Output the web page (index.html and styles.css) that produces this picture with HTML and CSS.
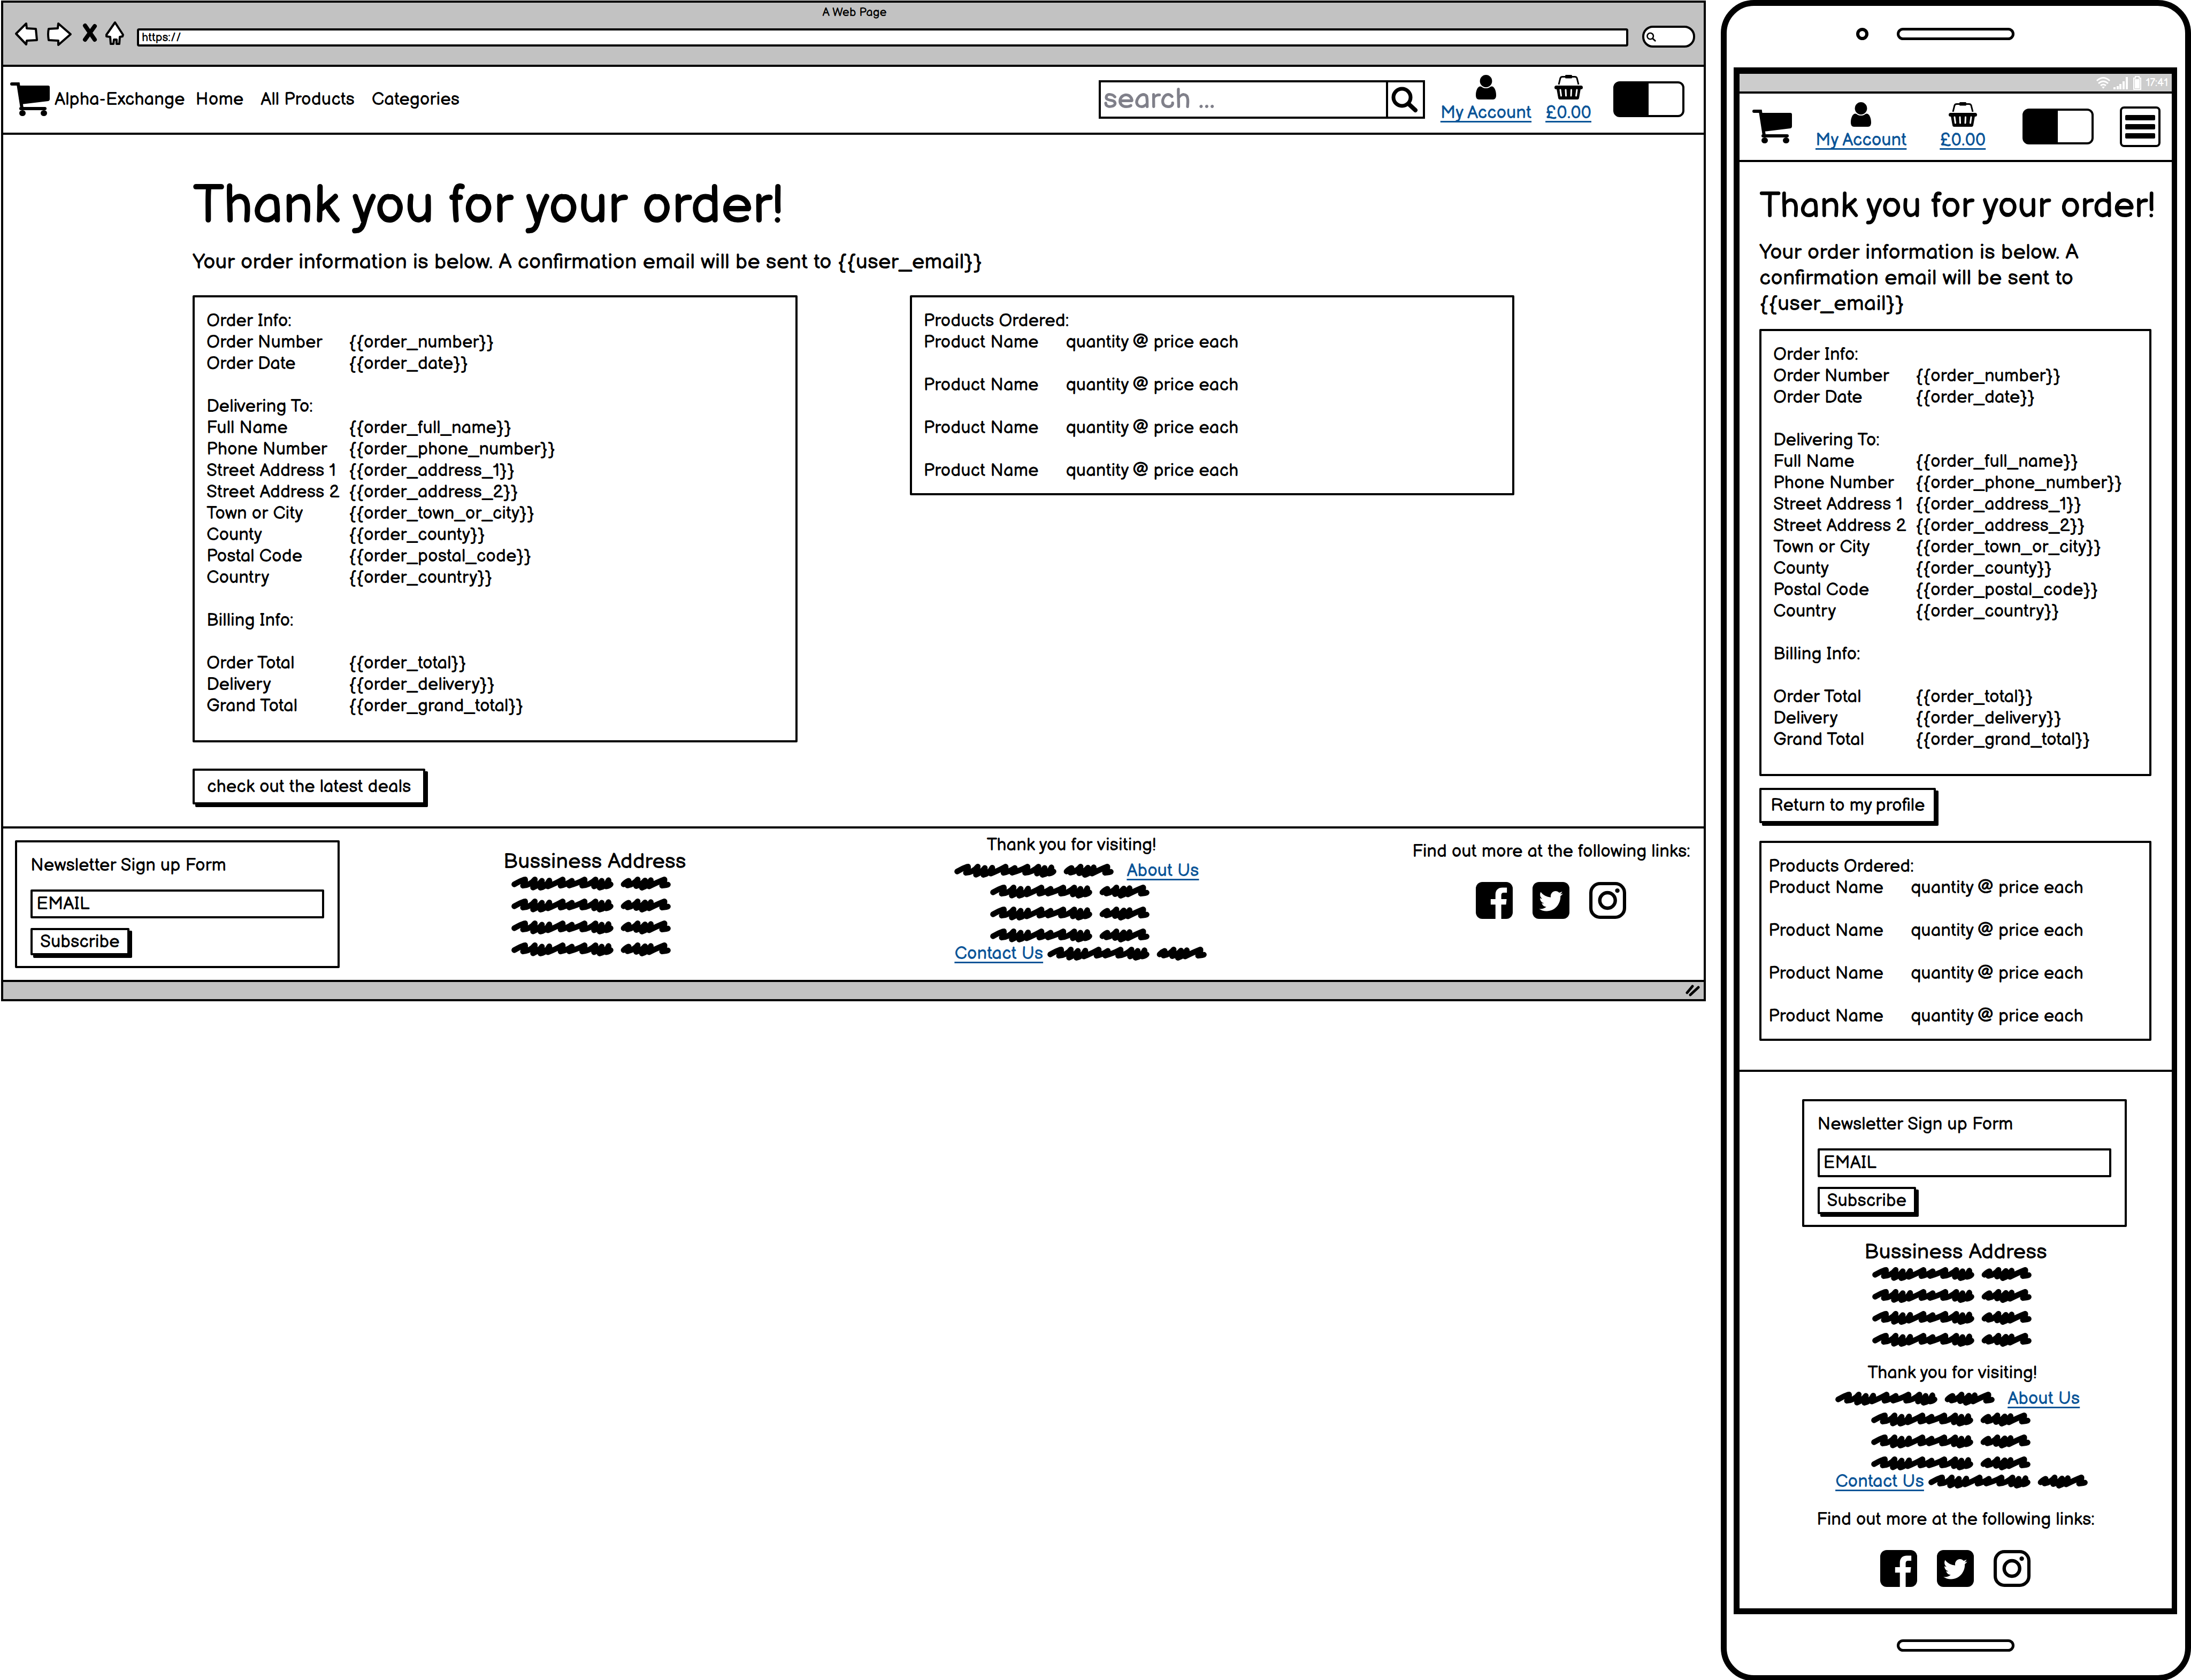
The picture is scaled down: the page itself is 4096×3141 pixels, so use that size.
FILE: index.html
```html
<!DOCTYPE html>
<html lang="en">
<head>
<meta charset="utf-8">
<title>Alpha-Exchange order confirmation wireframe</title>
<link rel="stylesheet" href="styles.css">
</head>
<body>
<svg class="sprite" aria-hidden="true">
  <symbol id="cart" viewBox="0 0 74 63">
    <path d="M3 3h12l7 45" fill="none" stroke="#000" stroke-width="6" stroke-linecap="round"/>
    <path d="M16 6h55q3 0 3 3v22q0 3-3 4l-50 6z"/>
    <rect x="17" y="46" width="51" height="6" rx="3"/>
    <ellipse cx="23" cy="57.500" rx="6" ry="5.500"/><ellipse cx="63" cy="57.500" rx="6" ry="5.500"/>
  </symbol>
  <symbol id="person" viewBox="0 0 38 46">
    <ellipse cx="19" cy="11.600" rx="11.400" ry="11.600"/>
    <path d="M8 21.500C11 21 12 25 19 25S27 21 30 21.500C35 22 38 30 38 38c0 5-2 8-6 8H6c-4 0-6-3-6-8C0 30 3 22 8 21.500z"/>
  </symbol>
  <symbol id="basket" viewBox="0 0 53 46">
    <path d="M8 18l3-12q1-2.500 4-2.500h23q3 0 4 2.500l3 12" fill="none" stroke="#000" stroke-width="3"/>
    <rect x="20" width="13" height="6.500" rx="1.500"/>
    <rect y="20" width="53" height="7" rx="3.500"/>
    <path d="M4 26h45l-3 17q-.5 3-3 3H10q-2.500 0-3-3z"/>
    <path d="M11 28l1.500 11M21 28l.5 11M31.500 28l-.5 11M42 28l-1.500 11" stroke="#fff" stroke-width="3" stroke-linecap="round"/>
  </symbol>
  <symbol id="scribble" viewBox="0 0 1076 94">
    <path fill="none" stroke="#000" stroke-width="38" stroke-linecap="round" stroke-linejoin="round" d="M19 52Q80 18 92 19 96 34 78 61 130 56 158 19 156 50 146 74 180 60 206 28 206 50 196 75 236 66 256 26 258 50 246 66 290 50 346 19 350 36 332 61 370 54 408 28 406 48 390 60 450 44 494 19 498 36 478 61 530 56 568 19 566 46 558 66 590 56 610 28 610 54 596 75 636 66 656 24 658 48 640 66 664 62 670 52M758 52Q776 34 792 28 796 46 784 60 830 50 853 19 852 44 843 64 880 54 903 26 900 54 882 75 920 64 942 24 942 50 930 66 990 36 1034 19 1036 40 1018 61 1050 58 1057 54"/>
  </symbol>
  <symbol id="facebook" viewBox="0 0 248 248">
    <rect width="248" height="248" rx="44"/>
    <path fill="#fff" d="M132 248V152H100V115h32V85c0-30 18-47 46-47h31v34h-21c-12 0-17 6-17 18v25h36l-4 37h-32v96z"/>
  </symbol>
  <symbol id="twitter" viewBox="0 0 248 248">
    <rect width="248" height="248" rx="44"/>
    <path fill="#fff" transform="translate(12 -4.500) scale(.5 .52)" d="M351.100 190.800c.2 2.800.2 5.700.2 8.500 0 86.700-66 186.600-186.600 186.600-37.200 0-71.700-10.800-100.700-29.400 5.300.6 10.400.8 15.800.8 30.700 0 58.900-10.400 81.400-28-28.800-.6-53-19.500-61.300-45.500 10.100 1.500 19.200 1.500 29.600-1.200-30-6.100-52.500-32.500-52.500-64.400v-.8c8.700 4.900 18.900 7.900 29.600 8.300a65.447 65.447 0 0 1-29.200-54.600c0-12.200 3.200-23.400 8.900-33.100 32.300 39.800 80.800 65.800 135.200 68.600-9.300-44.500 24-80.600 64-80.600 18.900 0 35.900 7.900 47.900 20.700 14.800-2.800 29-8.300 41.600-15.800-4.900 15.200-15.200 28-28.800 36.100 13.200-1.400 26-5.100 37.800-10.200-8.900 13.100-20.100 24.700-32.900 34z"/>
  </symbol>
  <symbol id="instagram" viewBox="0 0 248 248">
    <rect x="11" y="11" width="226" height="226" rx="62" fill="none" stroke="#000" stroke-width="22"/>
    <circle cx="123" cy="124" r="52" fill="none" stroke="#000" stroke-width="23"/>
    <circle cx="189" cy="58" r="15"/>
  </symbol>
  <symbol id="magnifier" viewBox="0 0 50 50">
    <circle cx="20" cy="21" r="16" fill="none" stroke="#000" stroke-width="7"/>
    <path d="M32 33l13 12" stroke="#000" stroke-width="8" stroke-linecap="round"/>
  </symbol>
</svg>

<div class="board">
  <section class="browser" aria-label="Desktop layout">
    <header class="chrome">
      <p class="chrome-title">A Web Page</p>
      <div class="toolbar">
        <svg class="history" viewBox="0 0 220 50" aria-hidden="true">
          <g fill="#fff" stroke="#000" stroke-width="4" stroke-linejoin="round">
            <path d="M4 24L23 5l1 9 17 1 2 21-19 1-1 7z"/>
            <path d="M65 15l17-1 1-9 23 20-23 20v-8l-18-1q-2-12 0-21z"/>
            <path d="M189 3l15 23-1 3-5 1-1 13h-5v-8h-5l-1 8h-5l-1-13-7-1v-3z"/>
          </g>
          <path d="M133 9l18 26M151 10l-18 25" stroke="#000" stroke-width="8" stroke-linecap="round"/>
        </svg>
        <input class="address" type="text" value="https://" aria-label="Address">
        <button class="pill" type="button" aria-label="Web search"><svg class="pill-icon"><use href="#magnifier"/></svg></button>
      </div>
    </header>

    <nav class="nav">
      <svg class="cart"><use href="#cart"/></svg>
      <a class="nav-link brand" href="#">Alpha-Exchange</a>
      <a class="nav-link home" href="#">Home</a>
      <a class="nav-link products" href="#">All Products</a>
      <a class="nav-link" href="#">Categories</a>
      <form class="search">
        <input class="search-input" type="text" placeholder="search ..." aria-label="Search">
        <button class="search-button" type="button" aria-label="Search"><svg class="search-icon"><use href="#magnifier"/></svg></button>
      </form>
      <a class="shortcut" href="#"><svg class="person"><use href="#person"/></svg><span class="link">My Account</span></a>
      <a class="shortcut" href="#"><svg class="basket"><use href="#basket"/></svg><span class="link">£0.00</span></a>
      <input class="toggle" type="checkbox" aria-label="Theme">
    </nav>

    <main class="main">
      <h1 class="title">Thank you for your order!</h1>
      <p class="lead">Your order information is below. A confirmation email will be sent to {{user_email}}</p>
      <div class="columns">
        <div class="box">
          <table class="table">
            <tbody>
              <tr><th>Order Info:</th><td></td></tr>
              <tr><th>Order Number</th><td>{{order_number}}</td></tr>
              <tr><th>Order Date</th><td>{{order_date}}</td></tr>
            </tbody>
            <tbody>
              <tr class="spaced"><th>Delivering To:</th><td></td></tr>
              <tr><th>Full Name</th><td>{{order_full_name}}</td></tr>
              <tr><th>Phone Number</th><td>{{order_phone_number}}</td></tr>
              <tr><th>Street Address 1</th><td>{{order_address_1}}</td></tr>
              <tr><th>Street Address 2</th><td>{{order_address_2}}</td></tr>
              <tr><th>Town or City</th><td>{{order_town_or_city}}</td></tr>
              <tr><th>County</th><td>{{order_county}}</td></tr>
              <tr><th>Postal Code</th><td>{{order_postal_code}}</td></tr>
              <tr><th>Country</th><td>{{order_country}}</td></tr>
            </tbody>
            <tbody>
              <tr class="spaced"><th>Billing Info:</th><td></td></tr>
              <tr class="spaced"><th>Order Total</th><td>{{order_total}}</td></tr>
              <tr><th>Delivery</th><td>{{order_delivery}}</td></tr>
              <tr><th>Grand Total</th><td>{{order_grand_total}}</td></tr>
            </tbody>
          </table>
        </div>
        <div class="box box-products">
          <table class="table">
            <tbody>
              <tr><th>Products Ordered:</th><td></td></tr>
              <tr><th>Product Name</th><td>quantity @ price each</td></tr>
              <tr class="spaced"><th>Product Name</th><td>quantity @ price each</td></tr>
              <tr class="spaced"><th>Product Name</th><td>quantity @ price each</td></tr>
              <tr class="spaced"><th>Product Name</th><td>quantity @ price each</td></tr>
            </tbody>
          </table>
        </div>
      </div>
      <button class="button deals" type="button">check out the latest deals</button>
    </main>

    <footer class="footer">
      <form class="newsletter">
        <label class="newsletter-title" for="email-desktop">Newsletter Sign up Form</label>
        <input class="email" id="email-desktop" type="text" value="EMAIL">
        <button class="button subscribe" type="button">Subscribe</button>
      </form>
      <section class="address-block">
        <h2 class="address-title">Bussiness Address</h2>
        <div class="scribbles">
          <svg class="scribble"><use href="#scribble"/></svg>
          <svg class="scribble"><use href="#scribble"/></svg>
          <svg class="scribble"><use href="#scribble"/></svg>
          <svg class="scribble"><use href="#scribble"/></svg>
        </div>
      </section>
      <section class="visit">
        <p class="visit-title">Thank you for visiting!</p>
        <div class="visit-row about"><svg class="scribble"><use href="#scribble"/></svg><a class="link" href="#">About Us</a></div>
        <div class="scribbles visit-lines">
          <svg class="scribble"><use href="#scribble"/></svg>
          <svg class="scribble"><use href="#scribble"/></svg>
          <svg class="scribble"><use href="#scribble"/></svg>
        </div>
        <div class="visit-row"><a class="link" href="#">Contact Us</a><svg class="scribble"><use href="#scribble"/></svg></div>
      </section>
      <section class="social">
        <p class="social-title">Find out more at the following links:</p>
        <div class="social-row">
          <a href="#" aria-label="Facebook"><svg class="social-icon"><use href="#facebook"/></svg></a>
          <a href="#" aria-label="Twitter"><svg class="social-icon"><use href="#twitter"/></svg></a>
          <a href="#" aria-label="Instagram"><svg class="social-icon"><use href="#instagram"/></svg></a>
        </div>
      </section>
    </footer>
    <div class="status">
      <svg class="grip" viewBox="0 0 27 22" aria-hidden="true"><path d="M3 15L13 3M9 19L24 5" stroke="#000" stroke-width="5" stroke-linecap="round"/></svg>
    </div>
  </section>

  <section class="phone" aria-label="Mobile layout">
    <div class="bezel-top"><span class="camera"></span><span class="speaker"></span></div>
    <div class="screen">
      <div class="phone-status">
        <svg class="wifi" viewBox="0 0 28 24" aria-hidden="true"><g fill="none" stroke="#fff" stroke-width="3"><path d="M2 8Q14-3 26 8M5 13Q14 5 23 13M9 17Q14 13 19 17"/></g><path fill="#fff" d="M11 19h6l-3 4z"/></svg>
        <svg class="signal" viewBox="0 0 27 24" aria-hidden="true"><path stroke="#fff" stroke-width="4" d="M2 24v-4M8 24v-6M13 24V14M19 24V9M25 24V1"/></svg>
        <svg class="battery" viewBox="0 0 15 26" aria-hidden="true"><path fill="none" stroke="#fff" stroke-width="2" d="M1 4h3V1h7v3h3v21H1z"/><path fill="#fff" d="M3 6h9v17H3z"/></svg>
        <span class="clock">17:41</span>
      </div>
      <nav class="phone-nav">
        <svg class="cart"><use href="#cart"/></svg>
        <a class="shortcut" href="#"><svg class="person"><use href="#person"/></svg><span class="link">My Account</span></a>
        <a class="shortcut" href="#"><svg class="basket"><use href="#basket"/></svg><span class="link">£0.00</span></a>
        <input class="toggle" type="checkbox" aria-label="Theme">
        <button class="menu" type="button" aria-label="Menu"><span class="bar"></span><span class="bar"></span><span class="bar"></span></button>
      </nav>
      <main class="phone-main">
        <h1 class="phone-title">Thank you for your order!</h1>
        <p class="lead">Your order information is below. A confirmation email will be sent to {{user_email}}</p>
        <div class="box">
          <table class="table">
            <tbody>
              <tr><th>Order Info:</th><td></td></tr>
              <tr><th>Order Number</th><td>{{order_number}}</td></tr>
              <tr><th>Order Date</th><td>{{order_date}}</td></tr>
            </tbody>
            <tbody>
              <tr class="spaced"><th>Delivering To:</th><td></td></tr>
              <tr><th>Full Name</th><td>{{order_full_name}}</td></tr>
              <tr><th>Phone Number</th><td>{{order_phone_number}}</td></tr>
              <tr><th>Street Address 1</th><td>{{order_address_1}}</td></tr>
              <tr><th>Street Address 2</th><td>{{order_address_2}}</td></tr>
              <tr><th>Town or City</th><td>{{order_town_or_city}}</td></tr>
              <tr><th>County</th><td>{{order_county}}</td></tr>
              <tr><th>Postal Code</th><td>{{order_postal_code}}</td></tr>
              <tr><th>Country</th><td>{{order_country}}</td></tr>
            </tbody>
            <tbody>
              <tr class="spaced"><th>Billing Info:</th><td></td></tr>
              <tr class="spaced"><th>Order Total</th><td>{{order_total}}</td></tr>
              <tr><th>Delivery</th><td>{{order_delivery}}</td></tr>
              <tr><th>Grand Total</th><td>{{order_grand_total}}</td></tr>
            </tbody>
          </table>
        </div>
        <button class="button profile" type="button">Return to my profile</button>
        <div class="box box-products">
          <table class="table">
            <tbody>
              <tr><th>Products Ordered:</th><td></td></tr>
              <tr><th>Product Name</th><td>quantity @ price each</td></tr>
              <tr class="spaced"><th>Product Name</th><td>quantity @ price each</td></tr>
              <tr class="spaced"><th>Product Name</th><td>quantity @ price each</td></tr>
              <tr class="spaced"><th>Product Name</th><td>quantity @ price each</td></tr>
            </tbody>
          </table>
        </div>
      </main>
      <footer class="phone-footer">
        <form class="newsletter">
          <label class="newsletter-title" for="email-phone">Newsletter Sign up Form</label>
          <input class="email" id="email-phone" type="text" value="EMAIL">
          <button class="button subscribe" type="button">Subscribe</button>
        </form>
        <section class="address-block">
          <h2 class="address-title">Bussiness Address</h2>
          <div class="scribbles">
            <svg class="scribble"><use href="#scribble"/></svg>
            <svg class="scribble"><use href="#scribble"/></svg>
            <svg class="scribble"><use href="#scribble"/></svg>
            <svg class="scribble"><use href="#scribble"/></svg>
          </div>
        </section>
        <section class="visit">
          <p class="visit-title">Thank you for visiting!</p>
          <div class="visit-row about"><svg class="scribble"><use href="#scribble"/></svg><a class="link" href="#">About Us</a></div>
          <div class="scribbles visit-lines">
            <svg class="scribble"><use href="#scribble"/></svg>
            <svg class="scribble"><use href="#scribble"/></svg>
            <svg class="scribble"><use href="#scribble"/></svg>
          </div>
          <div class="visit-row"><a class="link" href="#">Contact Us</a><svg class="scribble"><use href="#scribble"/></svg></div>
        </section>
        <section class="social">
          <p class="social-title">Find out more at the following links:</p>
          <div class="social-row">
            <a href="#" aria-label="Facebook"><svg class="social-icon"><use href="#facebook"/></svg></a>
            <a href="#" aria-label="Twitter"><svg class="social-icon"><use href="#twitter"/></svg></a>
            <a href="#" aria-label="Instagram"><svg class="social-icon"><use href="#instagram"/></svg></a>
          </div>
        </section>
      </footer>
    </div>
    <div class="bezel-bottom"><span class="speaker"></span></div>
  </section>
</div>
</body>
</html>
```
FILE: styles.css
```css
:root {
  --ink: #000;
  --link: #0b5598;
  --line: 4px solid var(--ink);
}

* { box-sizing: border-box; }

body {
  margin: 0;
  background: #fff;
  color: var(--ink);
  font: 33px/40px "Balsamiq Sans", "Liberation Sans", sans-serif;
}

h1, h2, p { margin: 0; font-weight: 400; }
svg { display: block; flex: none; }
input, button { font: inherit; color: inherit; margin: 0; border-radius: 0; }
a { color: inherit; text-decoration: none; }

.sprite { position: absolute; width: 0; height: 0; }

.board {
  display: grid;
  grid-template-columns: minmax(0, 3187fr) minmax(0, 879fr);
  align-items: start;
  gap: 28px;
  padding-left: 2px;
}

/* Shared parts */
.link {
  color: var(--link);
  text-decoration: underline;
  text-decoration-thickness: 3px;
  text-underline-offset: 5px;
  text-decoration-skip-ink: none;
  white-space: nowrap;
}

.shortcut {
  display: flex;
  flex-direction: column;
  align-items: center;
  gap: 5px;
}

.cart { width: 74px; height: 63px; }
.person { width: 38px; height: 46px; }
.basket { width: 53px; height: 46px; }

.toggle {
  appearance: none;
  flex: none;
  width: 133px;
  height: 67px;
  border: var(--line);
  border-radius: 12px;
  background: linear-gradient(90deg, var(--ink) 50%, #fff 50%);
}

.box {
  padding: 24px 20px 44px 22px;
  border: var(--line);
  border-radius: 2px;
}
.box-products { padding-bottom: 22px; }

.table { border-collapse: collapse; }
.table th, .table td {
  padding: 0;
  font-weight: 400;
  text-align: left;
  vertical-align: bottom;
  white-space: nowrap;
}
.table th { width: 266px; max-width: 266px; }
.table .spaced th, .table .spaced td { padding-top: 40px; }

.button {
  border: var(--line);
  border-radius: 2px;
  background: #fff;
  box-shadow: 5px 5px 0 var(--ink);
  white-space: nowrap;
}

.lead { font-size: 40px; line-height: 48px; }

.newsletter {
  display: flex;
  flex-direction: column;
  align-items: flex-start;
  width: 607px;
  padding: 23px 25px 20px;
  border: var(--line);
  border-radius: 2px;
}
.newsletter-title { margin-bottom: 25px; }
.email {
  width: 100%;
  height: 54px;
  margin-bottom: 18px;
  padding: 0 7px;
  border: var(--line);
  border-radius: 2px;
  background: #fff;
}
.subscribe { height: 51px; padding: 0 14px; }

.scribble { width: 298px; height: 26px; }
.scribbles { display: flex; flex-direction: column; gap: 15px; }

.address-block {
  display: flex;
  flex-direction: column;
  align-items: center;
  gap: 4px;
}
.address-title { font-size: 40px; line-height: 48px; white-space: nowrap; }
.address-block .scribbles { padding-right: 14px; }

.visit-title { padding-left: 60px; }
.visit-row { display: flex; align-items: center; gap: 8px; height: 40px; }
.about { gap: 24px; margin: 8px 0 6px; }
.visit-lines { margin: 0 0 1px 67px; }

.social { display: flex; flex-direction: column; align-items: center; gap: 37px; }
.social-title { white-space: nowrap; }
.social-row { display: flex; gap: 37px; }
.social-icon { width: 69px; height: 69px; }

/* Browser window */
.browser {
  margin-top: 1px;
  border: var(--line);
}

.chrome {
  padding: 4px 16px 32px 20px;
  background: #c2c2c2;
}
.chrome-title { font-size: 22px; line-height: 30px; text-align: center; }
.toolbar { display: flex; align-items: flex-end; }
.history { width: 220px; height: 50px; margin-right: 10px; }
.address {
  flex: 1;
  min-width: 0;
  height: 34px;
  margin: 0 26px 2px 0;
  padding: 0 5px;
  border: var(--line);
  border-radius: 4px;
  background: #fff;
  font-size: 22px;
  line-height: 26px;
}
.pill {
  width: 99px;
  height: 41px;
  padding: 0 4px;
  border: var(--line);
  border-radius: 20px;
  background: #fff;
}
.pill-icon { width: 18px; height: 20px; }

.nav {
  display: flex;
  align-items: center;
  padding: 15px 36px 17px 13px;
  border-top: var(--line);
  border-bottom: var(--line);
}
.nav-link { white-space: nowrap; }
.brand { margin: 0 20px 0 9px; }
.home { margin-right: 32px; }
.products { margin-right: 32px; }
.search {
  display: flex;
  width: 610px;
  height: 72px;
  margin: 0 29px 0 auto;
  border: var(--line);
}
.search-input {
  flex: 1;
  min-width: 0;
  padding: 0 5px;
  border: 0;
  background: #fff;
  font-size: 53px;
}
.search-input::placeholder { color: #80808a; opacity: 1; }
.search-button {
  width: 69px;
  padding: 0 6px;
  border: 0;
  border-left: var(--line);
  background: #fff;
}
.search-icon { width: 50px; height: 50px; }
.nav .shortcut { margin-right: 26px; }
.nav .toggle { margin-left: 15px; }

.main { padding: 74px 354px 41px; }
.title { font-size: 100px; line-height: 120px; margin-bottom: 20px; }
.columns {
  display: grid;
  grid-template-columns: 1fr 1fr;
  align-items: start;
  gap: 210px;
  margin: 38px 0 49px;
}
.deals { display: block; height: 67px; padding: 0 23px; }

.footer {
  display: grid;
  grid-template-columns: 607fr 952fr 864fr 732fr;
  align-items: start;
  padding: 11px 0 22px 22px;
  border-top: var(--line);
}
.footer .newsletter { margin-top: 11px; }
.footer .address-block { margin-top: 27px; }
.footer .visit { justify-self: center; }
.footer .social { justify-self: end; margin: 12px 25px 0 0; }

.status {
  display: flex;
  justify-content: flex-end;
  padding: 5px 7px;
  border-top: var(--line);
  background: #c2c2c2;
}
.grip { width: 27px; height: 22px; }

/* Phone */
.phone {
  padding: 0 15px 0 13px;
  border: 11px solid var(--ink);
  border-radius: 62px;
}
.bezel-top {
  display: grid;
  grid-template-columns: 1fr auto 1fr;
  align-items: center;
  padding: 41px 0 51px;
}
.camera {
  justify-self: end;
  width: 23px;
  height: 23px;
  margin-right: 53px;
  border: 6px solid var(--ink);
  border-radius: 50%;
}
.speaker {
  width: 220px;
  height: 23px;
  border: 5px solid var(--ink);
  border-radius: 12px;
}
.bezel-bottom { display: flex; justify-content: center; padding: 47px 0 44px; }

.screen {
  border: 11px solid var(--ink);
  border-right-width: 10px;
  border-top-width: 12px;
}
.phone-status {
  display: flex;
  align-items: center;
  justify-content: flex-end;
  height: 33px;
  padding-right: 7px;
  background: #ccc;
  color: #fff;
  font-size: 20px;
}
.wifi { width: 28px; height: 24px; margin-right: 5px; }
.signal { width: 27px; height: 24px; margin-right: 10px; }
.battery { width: 15px; height: 26px; margin-right: 8px; }

.phone-nav {
  display: flex;
  align-items: center;
  padding: 16px 21px 17px 24px;
  border-top: var(--line);
  border-bottom: var(--line);
}
.phone-nav .cart { margin-right: 44px; }
.phone-nav .shortcut { margin-right: 62px; }
.phone-nav .toggle { margin: 0 auto 0 7px; }
.menu {
  display: flex;
  flex-direction: column;
  justify-content: space-between;
  width: 76px;
  height: 76px;
  padding: 12px 6px;
  border: var(--line);
  border-radius: 8px;
  background: #fff;
}
.bar { height: 10px; border-radius: 2px; background: var(--ink); }

.phone-main { padding: 43px 38px 54px 37px; }
.phone-title { font-size: 67px; line-height: 80px; margin-bottom: 22px; white-space: nowrap; }
.phone-main .lead { margin-bottom: 23px; }
.profile { display: block; height: 66px; margin: 22px 0 33px; padding: 0 17px; }
.phone-main .box-products { padding-left: 13px; }

.phone-footer {
  display: flex;
  flex-direction: column;
  align-items: center;
  padding: 51px 0 40px;
  border-top: var(--line);
}
.phone-footer .newsletter { margin: 0 0 23px 32px; }
.phone-footer .visit { margin: 29px 0 31px 22px; }
```
